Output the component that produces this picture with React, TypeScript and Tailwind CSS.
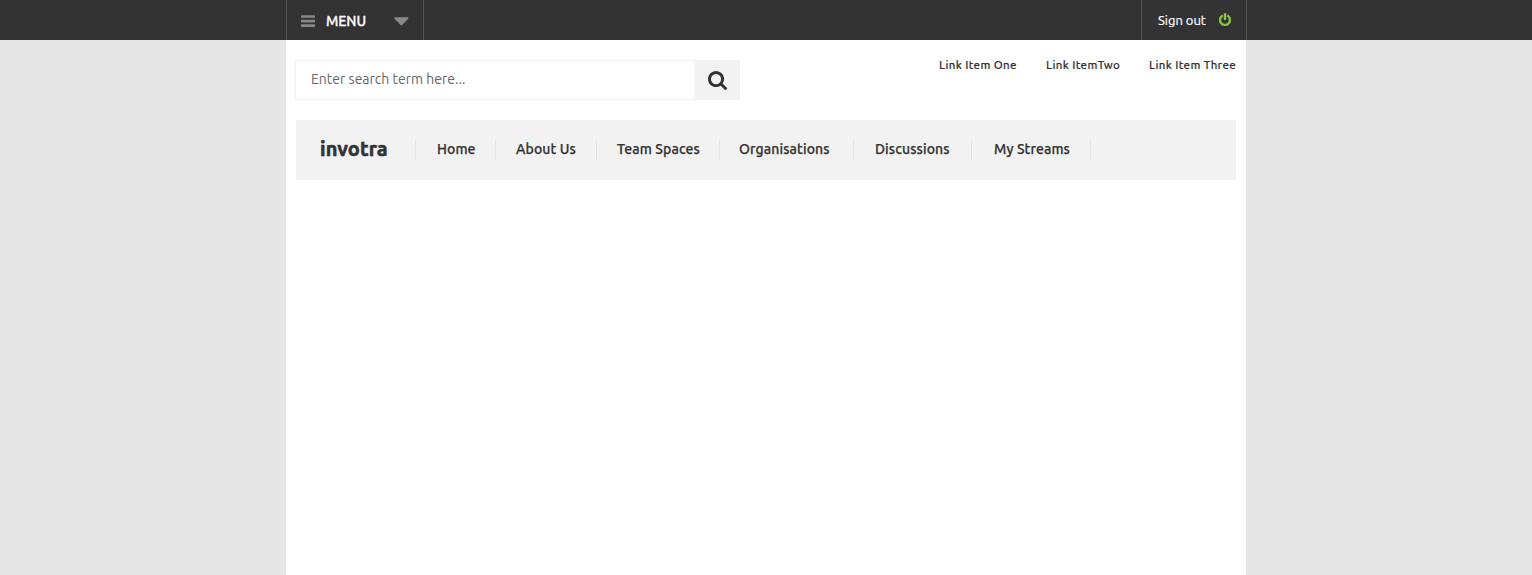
import React from "react";

const navItems = [
  { label: "Home", cell: "w-[80px] pl-[21px]" },
  { label: "About Us", cell: "w-[101px] pl-[20px]" },
  { label: "Team Spaces", cell: "w-[123px] pl-[20px]" },
  { label: "Organisations", cell: "w-[134px] pl-[19px]" },
  { label: "Discussions", cell: "w-[118px] pl-[21px]" },
  { label: "My Streams", cell: "w-[119px] pl-[22px]" },
];

function BarsIcon() {
  return (
    <svg className="h-[12px] w-[14px]" viewBox="0 0 14 12" fill="#888888">
      <rect x="0" y="0.2" width="14" height="2.6" rx="0.4" />
      <rect x="0" y="4.8" width="14" height="2.6" rx="0.4" />
      <rect x="0" y="9.3" width="14" height="2.6" rx="0.4" />
    </svg>
  );
}

function CaretIcon() {
  return (
    <svg className="h-[9px] w-[15px]" viewBox="0 0 15 9" fill="#888888">
      <path d="M1.2 0.3h12.2q1 0 1 .8 0 .4-.4.8L8.2 7.9q-.8.7-1.6 0L.6 1.9Q.2 1.5.2 1.1.2.3 1.2.3z" />
    </svg>
  );
}

function PowerIcon() {
  return (
    <svg className="-mt-px h-[13px] w-[12px]" viewBox="128 0 1536 1664" fill="#8dc63f" stroke="#8dc63f" strokeWidth="60">
      <path d="M1664 896q0 156-61 298t-164 245-245 164-298 61-298-61-245-164-164-245-61-298q0-182 80.5-343t226.5-270q43-32 95.5-25t83.5 50q32 42 24.5 94.5t-49.5 84.5q-98 74-151.5 181t-53.5 228q0 104 40.5 198.5t109.5 163.5 163.5 109.5 198.5 40.5 198.5-40.5 163.5-109.5 109.5-163.5 40.5-198.5q0-121-53.5-228t-151.5-181q-42-32-49.5-84.5t24.5-94.5q31-43 84-50t95 25q146 109 226.5 270t80.5 343zm-640-768v640q0 52-38 90t-90 38-90-38-38-90v-640q0-52 38-90t90-38 90 38 38 90z" />
    </svg>
  );
}

function SearchIcon() {
  return (
    <svg className="h-[19px] w-[19px]" viewBox="64 128 1664 1664" fill="#333333">
      <path d="M1216 832q0-185-131.5-316.5t-316.5-131.5-316.5 131.5-131.5 316.5 131.5 316.5 316.5 131.5 316.5-131.5 131.5-316.5zm512 832q0 52-38 90t-90 38q-54 0-90-38l-343-342q-179 124-399 124-143 0-273.5-55.5t-225-150-150-225-55.5-273.5 55.5-273.5 150-225 225-150 273.5-55.5 273.5 55.5 225 150 150 225 55.5 273.5q0 220-124 399l343 343q37 37 37 90z" />
    </svg>
  );
}

export default function App() {
  return (
    <div className="flex h-[575px] w-full flex-col overflow-hidden bg-[#e6e6e6] font-['Ubuntu','Noto_Sans',sans-serif] text-[#333333]">
      <header className="h-10 shrink-0 bg-[#333333] text-white">
        <div className="mx-auto flex w-[960px]">
          <div className="flex w-[961px] shrink-0 justify-between border-r border-[#555555]">
            <button className="flex h-10 w-[138px] items-center border-x border-[#555555] pl-[14px] pt-[2px]">
              <BarsIcon />
              <span className="ml-[11px] w-[68px] text-left text-[14px] leading-5 font-medium [-webkit-text-stroke:0.3px_#ffffff]">MENU</span>
              <CaretIcon />
            </button>
            <button className="flex h-10 w-[105px] items-center border-l border-[#555555] pl-[16px]">
              <span className="w-[61px] text-left text-[13px] leading-5 whitespace-nowrap [-webkit-text-stroke:0.2px_#ffffff]">Sign out</span>
              <PowerIcon />
            </button>
          </div>
        </div>
      </header>

      <main className="mx-auto flex w-[960px] flex-1 flex-col bg-white">
        <div className="flex h-20 items-start justify-between pt-5 pl-[9px]">
          <form className="flex h-10 w-[445px] border border-[#f2f2f2]" onSubmit={(e) => e.preventDefault()}>
            <input
              aria-label="Search"
              placeholder="Enter search term here..."
              className="h-[36px] w-[399px] pl-[15px] text-[14px] outline-none placeholder:text-[#666666]"
            />
            <button className="flex h-[38px] w-[44px] items-center justify-center bg-[#f2f2f2] pl-px" aria-label="Submit search">
              <SearchIcon />
            </button>
          </form>
          <nav className="-mt-[5px] flex text-[11.5px] leading-5 font-medium tracking-[0.34px] whitespace-nowrap [-webkit-text-stroke:0.15px_#333333]">
            <a className="w-[107px]">Link Item One</a>
            <a className="w-[103px]">Link ItemTwo</a>
            <a className="w-[97px]">Link Item Three</a>
          </nav>
        </div>

        <nav className="mx-[10px] flex h-[60px] items-center bg-[#f2f2f2] whitespace-nowrap">
          <a className="flex h-5 w-[120px] items-center border-r border-[#e5e5e5] pl-[24px] text-[20px] leading-5 font-bold tracking-[0.1px] [-webkit-text-stroke:0.6px_#333333]">
            <span className="-mt-[2px]">invotra</span>
          </a>
          {navItems.map((item) => (
            <a
              key={item.label}
              className={`${item.cell} flex h-5 items-center border-r border-[#e5e5e5] text-[14px] leading-5 font-medium tracking-[0.1px] [-webkit-text-stroke:0.25px_#333333]`}
            >
              <span className="-mt-[2px]">{item.label}</span>
            </a>
          ))}
        </nav>
      </main>
    </div>
  );
}
